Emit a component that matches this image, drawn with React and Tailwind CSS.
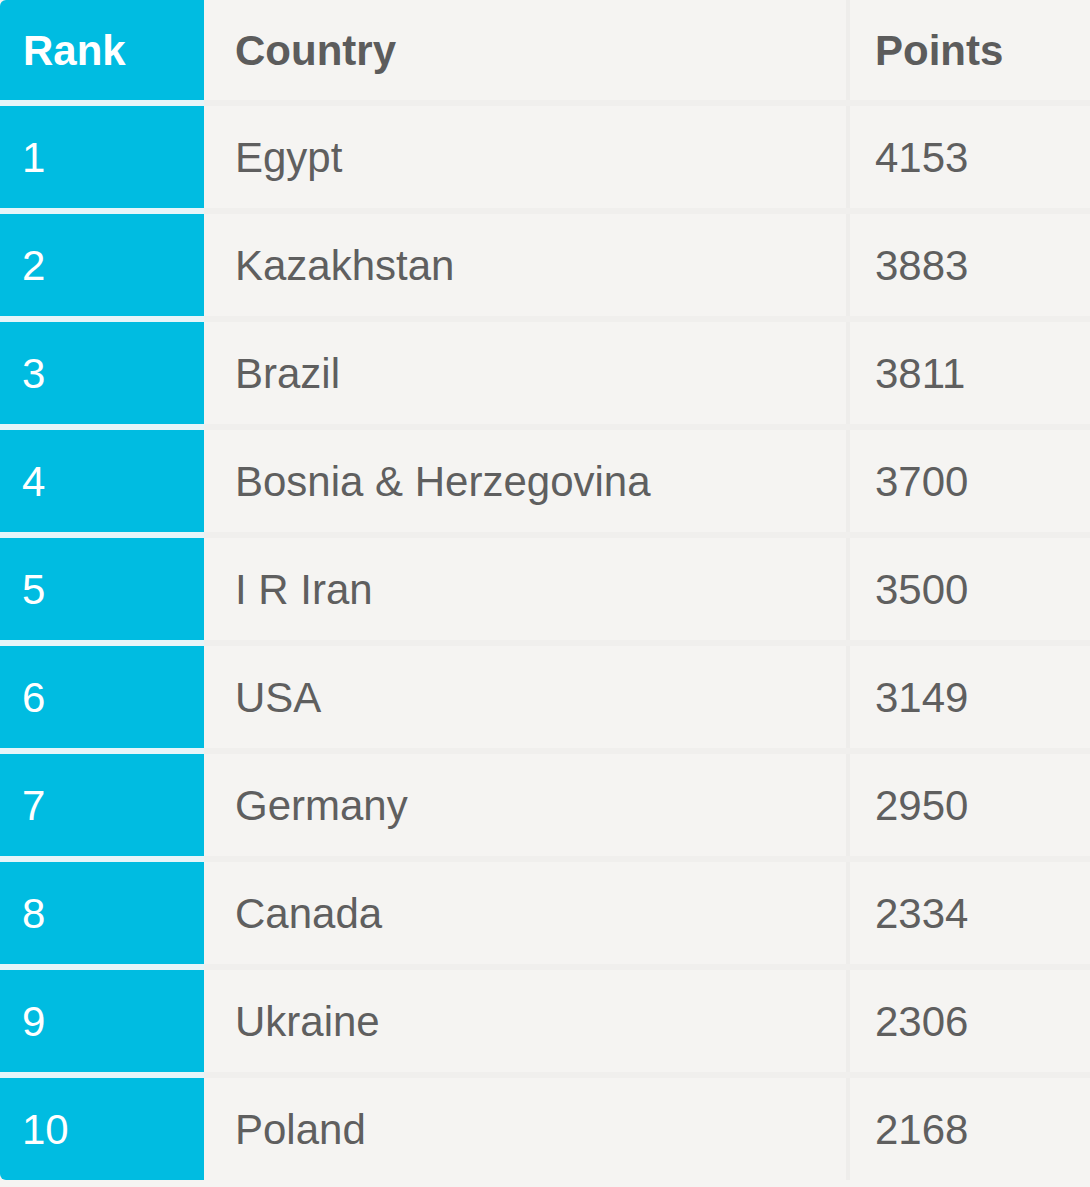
import React from "react";

const rows = [
  { rank: 1, country: "Egypt", points: 4153 },
  { rank: 2, country: "Kazakhstan", points: 3883 },
  { rank: 3, country: "Brazil", points: 3811 },
  { rank: 4, country: "Bosnia & Herzegovina", points: 3700 },
  { rank: 5, country: "I R Iran", points: 3500 },
  { rank: 6, country: "USA", points: 3149 },
  { rank: 7, country: "Germany", points: 2950 },
  { rank: 8, country: "Canada", points: 2334 },
  { rank: 9, country: "Ukraine", points: 2306 },
  { rank: 10, country: "Poland", points: 2168 },
];

const App = () => {
  return (
    <div
      className="w-[1090px] h-[1187px] bg-[#f5f4f2] overflow-hidden"
      style={{ fontFamily: '"Liberation Sans", Arial, sans-serif' }}
    >
      {/* header */}
      <div className="grid grid-cols-[204px_642px_244px] h-[100px] text-[42px] font-bold">
        <div className="bg-[#00bce1] text-white flex items-center pl-[23px] rounded-tl-[6px]">
          Rank
        </div>
        <div className="flex items-center pl-[31px] text-[#5c5c5c]">Country</div>
        <div className="flex items-center pl-[25px] text-[#5c5c5c] border-l-4 border-[#eeedeb]">
          Points
        </div>
      </div>

      {rows.map((row, i) => (
        <div key={row.rank}>
          {/* separator */}
          <div className="grid grid-cols-[204px_642px_244px] h-[6px]">
            <div className="bg-[#e6f5f9]" />
            <div className="bg-[#f0efed]" />
            <div className="bg-[#f0efed]" />
          </div>
          <div className="grid grid-cols-[204px_642px_244px] h-[102px] text-[42px] text-[#5f5f5f]">
            <div
              className={
                "bg-[#00bce1] text-white flex items-center pl-[22px]" +
                (i === rows.length - 1 ? " rounded-bl-[6px]" : "")
              }
            >
              {row.rank}
            </div>
            <div className="flex items-center pl-[31px]">{row.country}</div>
            <div className="flex items-center pl-[25px] border-l-4 border-[#eeedeb]">
              {row.points}
            </div>
          </div>
        </div>
      ))}
    </div>
  );
};

export default App;
